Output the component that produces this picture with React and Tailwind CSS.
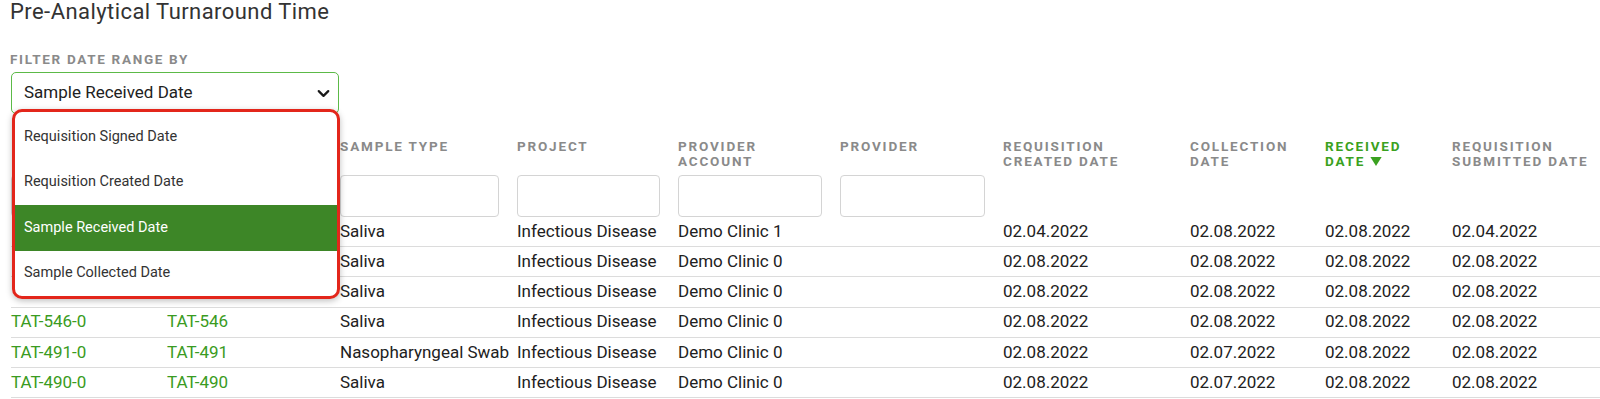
import { ChevronDown } from "lucide-react";

const columns = [
  { key: "sample", label: "", filter: true },
  { key: "req", label: "", filter: true },
  { key: "type", label: "Sample Type", filter: true },
  { key: "project", label: "Project", filter: true },
  { key: "account", label: "Provider Account", filter: true },
  { key: "provider", label: "Provider", filter: true },
  { key: "created", label: "Requisition Created Date" },
  { key: "collected", label: "Collection Date" },
  { key: "received", label: "Received Date", sorted: true },
  { key: "submitted", label: "Requisition Submitted Date" },
];

// first two cells of the top rows sit under the open dropdown
const rows = [
  ["", "", "Saliva", "Infectious Disease", "Demo Clinic 1", "", "02.04.2022", "02.08.2022", "02.08.2022", "02.04.2022"],
  ["", "", "Saliva", "Infectious Disease", "Demo Clinic 0", "", "02.08.2022", "02.08.2022", "02.08.2022", "02.08.2022"],
  ["", "", "Saliva", "Infectious Disease", "Demo Clinic 0", "", "02.08.2022", "02.08.2022", "02.08.2022", "02.08.2022"],
  ["TAT-546-0", "TAT-546", "Saliva", "Infectious Disease", "Demo Clinic 0", "", "02.08.2022", "02.08.2022", "02.08.2022", "02.08.2022"],
  ["TAT-491-0", "TAT-491", "Nasopharyngeal Swab", "Infectious Disease", "Demo Clinic 0", "", "02.08.2022", "02.07.2022", "02.08.2022", "02.08.2022"],
  ["TAT-490-0", "TAT-490", "Saliva", "Infectious Disease", "Demo Clinic 0", "", "02.08.2022", "02.07.2022", "02.08.2022", "02.08.2022"],
];

const options = [
  "Requisition Signed Date",
  "Requisition Created Date",
  "Sample Received Date",
  "Sample Collected Date",
];

const grid =
  "grid grid-cols-[156px_173px_177px_161px_162px_163px_187px_135px_127px_1fr]";

const App = () => {
  const selected = "Sample Received Date";

  return (
    <div className="w-[1600px] h-[399px] overflow-hidden bg-white font-['Roboto',sans-serif] text-[#212121]">
      <div className="pl-[10px]">
        {/* Page title */}
        <h1 className="text-[22px] leading-[24px] tracking-[0.02em] text-[#333]">
          Pre-Analytical Turnaround Time
        </h1>

        {/* Date range filter */}
        <div className="mt-[27px] text-[13.5px] leading-[16px] font-bold tracking-[0.125em] uppercase text-[#8a8a8a]">
          Filter date range by
        </div>
        <div className="relative z-10 ml-[1px] mt-[5px] w-[328px]">
          <div className="flex h-[42px] items-center justify-between rounded-[5px] border border-[#5cba47] pl-[12px] pr-[5px] text-[17px]">
            <span>{selected}</span>
            <ChevronDown size={19} strokeWidth={2.8} className="text-[#1a1a1a]" />
          </div>

          <div className="absolute left-[1px] top-[37px] w-[328px] overflow-hidden rounded-[10px] border-[3px] border-[#e3261b] bg-white pt-[2px] shadow-[0_2px_6px_rgba(0,0,0,0.25)]">
            {options.map((opt) => (
              <div
                key={opt}
                className={
                  opt === selected
                    ? "flex h-[45.5px] items-center px-[9px] text-[14.5px] text-white bg-[#3d8627]"
                    : "flex h-[45.5px] items-center px-[9px] text-[14.5px] text-[#333]"
                }
              >
                {opt}
              </div>
            ))}
          </div>
        </div>

        {/* Table */}
        <div className="ml-[1px] mt-[25px]">
          <div className={grid}>
            {columns.map((col) => (
              <div key={col.key} className="pr-[10px]">
                <div
                  className={
                    col.sorted
                      ? "h-[30px] text-[13.5px] leading-[15px] font-bold tracking-[0.135em] uppercase text-[#3aa120]"
                      : "h-[30px] text-[13.5px] leading-[15px] font-bold tracking-[0.135em] uppercase text-[#8a8a8a]"
                  }
                >
                  {col.label}
                  {col.sorted && (
                    <svg
                      viewBox="0 0 10 8"
                      className="ml-[5px] inline-block h-[9px] w-[12px] align-[0px]"
                    >
                      <path d="M0 0h10L5 8z" fill="#3aa120" />
                    </svg>
                  )}
                </div>
                <div className="mt-[6px] h-[42px] pr-[8px]">
                  {col.filter && (
                    <div className="h-[42px] rounded-[4px] border border-[#d4d4d4] bg-white" />
                  )}
                </div>
              </div>
            ))}
          </div>

          {rows.map((row, i) => (
            <div
              key={i}
              className={`${grid} h-[30.2px] items-center border-b border-[#dcdcdc] text-[17px]`}
            >
              {row.map((cell, j) => (
                <div
                  key={j}
                  className={j < 2 ? "whitespace-nowrap text-[#3a9b22]" : "whitespace-nowrap"}
                >
                  {cell}
                </div>
              ))}
            </div>
          ))}
        </div>
      </div>
    </div>
  );
};

export default App;
